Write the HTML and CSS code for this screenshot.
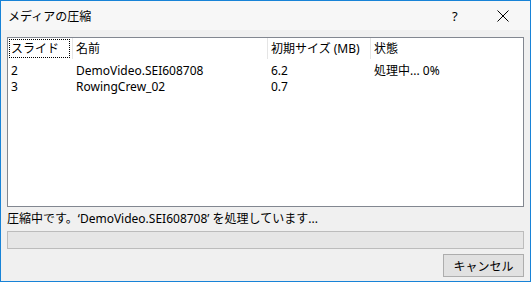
FILE: index.html
```html
<!DOCTYPE html>
<html lang="ja">
<head>
  <meta charset="UTF-8" />
  <title>メディアの圧縮</title>
  <link rel="stylesheet" href="styles.css">
</head>
<body>

<div class="dialog">
  <div class="titlebar">
    <span class="title">メディアの圧縮</span>
    <span class="help">?</span>
    <span class="close">
      <svg width="12" height="12" viewBox="0 0 12 12"><path d="M0.5 0.5 L11.5 11.5 M11.5 0.5 L0.5 11.5" stroke="#000" stroke-width="1"/></svg>
    </span>
  </div>

  <div class="content">
    <div class="list">
      <div class="row head">
        <div class="cell c1"><span class="focus">スライド</span></div>
        <div class="cell c2">名前</div>
        <div class="cell c3">初期サイズ (MB)</div>
        <div class="cell c4">状態</div>
      </div>
      <div class="row first">
        <div class="cell c1">2</div>
        <div class="cell c2">DemoVideo.SEI608708</div>
        <div class="cell c3">6.2</div>
        <div class="cell c4">処理中... 0%</div>
      </div>
      <div class="row">
        <div class="cell c1">3</div>
        <div class="cell c2">RowingCrew_02</div>
        <div class="cell c3">0.7</div>
        <div class="cell c4"></div>
      </div>
    </div>

    <div class="status">圧縮中です。‘DemoVideo.SEI608708’ を処理しています...</div>
    <div class="progress"></div>

    <div class="buttons">
      <button class="btn">キャンセル</button>
    </div>
  </div>
</div>

</body>
</html>
```

FILE: styles.css
```css
body {
  margin: 0;
  font-family: "Noto Sans", "Noto Sans CJK JP", sans-serif;
  font-size: 12px;
  color: #000;
  background: #fff;
}

.dialog {
  width: 531px;
  height: 282px;
  box-sizing: border-box;
  border: 1px solid #1883d7;
  background: #f0f0f0;
  display: flex;
  flex-direction: column;
}

.titlebar {
  height: 29px;
  background: #f7f7f7;
  display: flex;
  align-items: center;
  padding-left: 7px;
}

.title {
  flex: 1;
  font-size: 12px;
}

.help {
  width: 14px;
  margin-right: 31px;
  font-size: 13px;
}

.close {
  width: 12px;
  height: 12px;
  margin-right: 21px;
  display: flex;
}

.content {
  flex: 1;
  padding: 7px 6px 0 6px;
  display: flex;
  flex-direction: column;
}

.list {
  height: 170px;
  box-sizing: border-box;
  border: 1px solid #828790;
  background: #fff;
}

.row {
  display: flex;
  height: 15px;
  line-height: 15px;
}

.row.head {
  height: 21px;
  line-height: 21px;
  margin-bottom: 4px;
}

.row.first {
  margin-bottom: 1px;
}

.cell {
  padding-left: 3px;
  box-sizing: border-box;
  white-space: nowrap;
}

.head .cell {
  border-right: 1px solid #e5e5e5;
  padding-left: 3px;
}

.head .c1 {
  padding-left: 2px;
}

.focus {
  display: inline-block;
  outline: 1px dotted #000;
  line-height: 17px;
  padding: 0 1px;
  width: 57px;
}

.c1 { width: 65px; }
.c2 { width: 195px; }
.c3 { width: 103px; }
.c4 { width: 90px; }
.head .c4 { border-right: none; }

.status {
  margin-top: 3px;
  height: 18px;
  line-height: 18px;
}

.progress {
  margin-top: 3px;
  height: 18px;
  box-sizing: border-box;
  border: 1px solid #bcbcbc;
  background: #e6e6e6;
}

.buttons {
  display: flex;
  justify-content: flex-end;
  margin-top: 5px;
}

.btn {
  width: 81px;
  height: 23px;
  border: 1px solid #adadad;
  background: #e1e1e1;
  font-family: "Noto Sans CJK JP", sans-serif;
  font-size: 12px;
  padding: 0;
}
```
